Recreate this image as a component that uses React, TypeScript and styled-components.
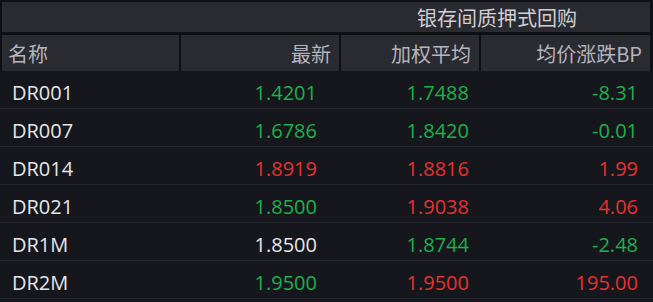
import React from "react"
import styled, { createGlobalStyle } from "styled-components"

const colors = {
  frame: "#0f1014",
  bar: "#2a2a31",
  body: "#15171c",
  line: "#22252b",
  head: "#b4b4bc",
  name: "#e6e6ea",
  up: "#e8302f",
  down: "#1fb04a",
  flat: "#e6e6ea",
}

type Trend = "up" | "down" | "flat"

const rows: { name: string; last: [string, Trend]; avg: [string, Trend]; bp: [string, Trend] }[] = [
  { name: "DR001", last: ["1.4201", "down"], avg: ["1.7488", "down"], bp: ["-8.31", "down"] },
  { name: "DR007", last: ["1.6786", "down"], avg: ["1.8420", "down"], bp: ["-0.01", "down"] },
  { name: "DR014", last: ["1.8919", "up"], avg: ["1.8816", "up"], bp: ["1.99", "up"] },
  { name: "DR021", last: ["1.8500", "down"], avg: ["1.9038", "up"], bp: ["4.06", "up"] },
  { name: "DR1M", last: ["1.8500", "flat"], avg: ["1.8744", "down"], bp: ["-2.48", "down"] },
  { name: "DR2M", last: ["1.9500", "down"], avg: ["1.9500", "up"], bp: ["195.00", "up"] },
]

const App = () => {
  return (
    <>
      <GlobalStyle />
      <Board>
        <Top>
          <TitleBar>
            <Title>银存间质押式回购</Title>
          </TitleBar>
          <HeaderRow>
            <HeadCell $align="left">名称</HeadCell>
            <HeadCell>最新</HeadCell>
            <HeadCell>加权平均</HeadCell>
            <HeadCell>均价涨跌BP</HeadCell>
          </HeaderRow>
        </Top>
        {rows.map((r) => (
          <Row key={r.name}>
            <Name>{r.name}</Name>
            <Value $trend={r.last[1]} $pad={24}>{r.last[0]}</Value>
            <Value $trend={r.avg[1]} $pad={12}>{r.avg[0]}</Value>
            <Value $trend={r.bp[1]} $pad={12}>{r.bp[0]}</Value>
          </Row>
        ))}
      </Board>
    </>
  )
}
export default App

const GlobalStyle = createGlobalStyle`
  html, body {
    margin: 0;
    padding: 0;
    background: ${colors.body};
  }
  body {
    font-family: "Open Sans", "Noto Sans CJK SC", sans-serif;
  }
`

const Board = styled.div`
  width: 653px;
  height: 302px;
  background: ${colors.body};
  overflow: hidden;
`

const Top = styled.div`
  background: ${colors.frame};
  padding: 2px 3px 0 2px;
  display: flex;
  flex-direction: column;
  gap: 3px;
`

const TitleBar = styled.div`
  height: 30px;
  background: ${colors.bar};
  display: grid;
  grid-template-columns: 337px 1fr;
`

const Title = styled.div`
  grid-column: 2;
  display: flex;
  align-items: center;
  justify-content: center;
  color: #cfcfd4;
  font-size: 20px;
  font-family: "Noto Sans CJK SC", sans-serif;
  padding-left: 5px;
`

const HeaderRow = styled.div`
  height: 36px;
  display: grid;
  grid-template-columns: 177px 158px 138px 1fr;
  gap: 2px;
`

const HeadCell = styled.div<{ $align?: "left" | "right" }>`
  background: ${colors.bar};
  color: ${colors.head};
  font-size: 20px;
  font-family: "Noto Sans CJK SC", sans-serif;
  display: flex;
  align-items: center;
  justify-content: ${(p) => (p.$align === "left" ? "flex-start" : "flex-end")};
  padding: 0 8px 0 6px;
  white-space: nowrap;
`

const Row = styled.div`
  box-sizing: border-box;
  height: 38px;
  border-bottom: 1px solid ${colors.line};
  display: grid;
  grid-template-columns: 179px 160px 140px 1fr;
  padding: 5px 3px 0 2px;
  align-items: center;
  font-size: 20px;
`

const Name = styled.div`
  color: ${colors.name};
  padding-left: 10px;
`

const Value = styled.div<{ $trend: Trend; $pad: number }>`
  color: ${(p) => colors[p.$trend]};
  text-align: right;
  padding-right: ${(p) => p.$pad}px;
`
